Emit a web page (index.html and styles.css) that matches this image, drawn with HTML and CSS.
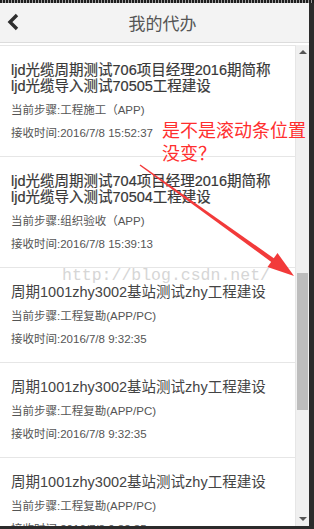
FILE: index.html
```html
<!DOCTYPE html>
<html lang="zh-CN">
<head>
  <meta charset="UTF-8" />
  <meta name="viewport" content="width=device-width, initial-scale=1" />
  <title>我的代办</title>
  <link rel="stylesheet" href="styles.css">
</head>
<body>
  <div class="frame">
    <div class="dots"></div>
    <div class="screen">
      <header class="top-bar">
        <a class="back-btn" href="#" title="返回">
          <svg width="14" height="18" viewBox="0 0 14 18">
            <polyline points="11,2 4,9 11,16" fill="none" stroke="#2e2e2e" stroke-width="3.4" stroke-linejoin="miter" />
          </svg>
        </a>
        <h1>我的代办</h1>
      </header>

      <div class="main">
        <ul class="todo-list">
          <li class="todo-item unread">
            <p class="todo-title">ljd光缆周期测试706项目经理2016期简称<br>ljd光缆导入测试70505工程建设</p>
            <p class="todo-info">当前步骤:工程施工（APP)</p>
            <p class="todo-info">接收时间:2016/7/8 15:52:37</p>
          </li>
          <li class="todo-item unread">
            <p class="todo-title">ljd光缆周期测试704项目经理2016期简称<br>ljd光缆导入测试70504工程建设</p>
            <p class="todo-info">当前步骤:组织验收（APP)</p>
            <p class="todo-info">接收时间:2016/7/8 15:39:13</p>
          </li>
          <li class="todo-item">
            <p class="todo-title">周期1001zhy3002基站测试zhy工程建设</p>
            <p class="todo-info">当前步骤:工程复勘(APP/PC)</p>
            <p class="todo-info">接收时间:2016/7/8 9:32:35</p>
          </li>
          <li class="todo-item">
            <p class="todo-title">周期1001zhy3002基站测试zhy工程建设</p>
            <p class="todo-info">当前步骤:工程复勘(APP/PC)</p>
            <p class="todo-info">接收时间:2016/7/8 9:32:35</p>
          </li>
          <li class="todo-item">
            <p class="todo-title">周期1001zhy3002基站测试zhy工程建设</p>
            <p class="todo-info">当前步骤:工程复勘(APP/PC)</p>
            <p class="todo-info">接收时间:2016/7/8 9:32:35</p>
          </li>
        </ul>

        <div class="scrollbar">
          <div class="sb-arrow"><span class="tri-up"></span></div>
          <div class="sb-track"><div class="sb-thumb"></div></div>
          <div class="sb-arrow"><span class="tri-down"></span></div>
        </div>
      </div>
    </div>

    <!-- annotation drawn on top of the screenshot -->
    <div class="watermark">http://blog.csdn.net/</div>
    <div class="note">是不是滚动条位置<br>没变？</div>
    <svg class="arrow" width="314" height="529" viewBox="0 0 314 529">
      <polygon points="139.6,165.4 140.4,164.6 279.3,262.1 276.7,265.9" fill="#f23a3a" />
      <polygon points="294,276 267.5,267 277.5,253" fill="#f23a3a" />
    </svg>
  </div>
</body>
</html>
```

FILE: styles.css
```css
body {
  margin: 0;
  background: #2b2b2b;
  font-family: "Liberation Sans", "Noto Sans CJK SC", sans-serif;
}

.frame {
  position: relative;
  width: 314px;
  height: 529px;
  overflow: hidden;
}

.dots {
  height: 3px;
  background: repeating-linear-gradient(90deg, #1e1e1e 0 2px, #9a9a9a 2px 3px);
}

.screen {
  width: 309px;
  height: 523px;
  background: #fff;
  display: flex;
  flex-direction: column;
  overflow: hidden;
}

.top-bar {
  height: 39px;
  flex-shrink: 0;
  background: #f3f3f3;
  border-bottom: 1px solid #dcdcdc;
  display: flex;
  align-items: center;
  position: relative;
}

.back-btn {
  display: flex;
  align-items: center;
  padding: 0 0 2px 6px;
  position: absolute;
  left: 0;
  top: 10px;
}

.top-bar h1 {
  flex: 1;
  margin: 0;
  padding-left: 16px;
  text-align: center;
  font-size: 17px;
  font-weight: normal;
  color: #555;
}

.main {
  flex: 1;
  display: flex;
  padding-top: 2px;
  min-height: 0;
}

.todo-list {
  list-style: none;
  margin: 0;
  padding: 0;
  width: 295px;
  border-right: 1px solid #e6e6e6;
  overflow: hidden;
}

.todo-item {
  border-top: 1px solid #e6e6e6;
  padding: 16px 11px 15px;
}

.todo-item p {
  margin: 0;
}

.todo-title {
  font-size: 14.5px;
  line-height: 16px;
  color: #444;
  margin-bottom: 8px !important;
  white-space: nowrap;
}

.unread .todo-title {
  color: #383838;
  -webkit-text-stroke: 0.2px #383838;
}

.todo-info {
  font-size: 11.5px;
  line-height: 16px;
  color: #555;
}

.todo-info + .todo-info {
  margin-top: 7px;
}

.scrollbar {
  width: 13px;
  background: #f0f0f0;
  display: flex;
  flex-direction: column;
}

.sb-arrow {
  height: 14px;
  display: flex;
  align-items: center;
  justify-content: center;
}

.tri-up,
.tri-down {
  width: 0;
  height: 0;
  border-left: 4px solid transparent;
  border-right: 4px solid transparent;
}

.tri-up {
  border-bottom: 4px solid #555;
}

.tri-down {
  border-top: 4px solid #555;
}

.sb-track {
  flex: 1;
}

.sb-thumb {
  margin: 214px 1px 0;
  height: 137px;
  background: #bdbdbd;
}

.watermark {
  position: absolute;
  left: 62px;
  top: 266px;
  font-family: "Liberation Mono", monospace;
  font-size: 16.5px;
  color: #d6d6d6;
  white-space: nowrap;
}

.note {
  position: absolute;
  left: 162px;
  top: 118px;
  font-family: "Noto Sans CJK SC", sans-serif;
  font-size: 18px;
  line-height: 23px;
  color: #ff2e2e;
  white-space: nowrap;
}

.arrow {
  position: absolute;
  left: 0;
  top: 0;
}
```
